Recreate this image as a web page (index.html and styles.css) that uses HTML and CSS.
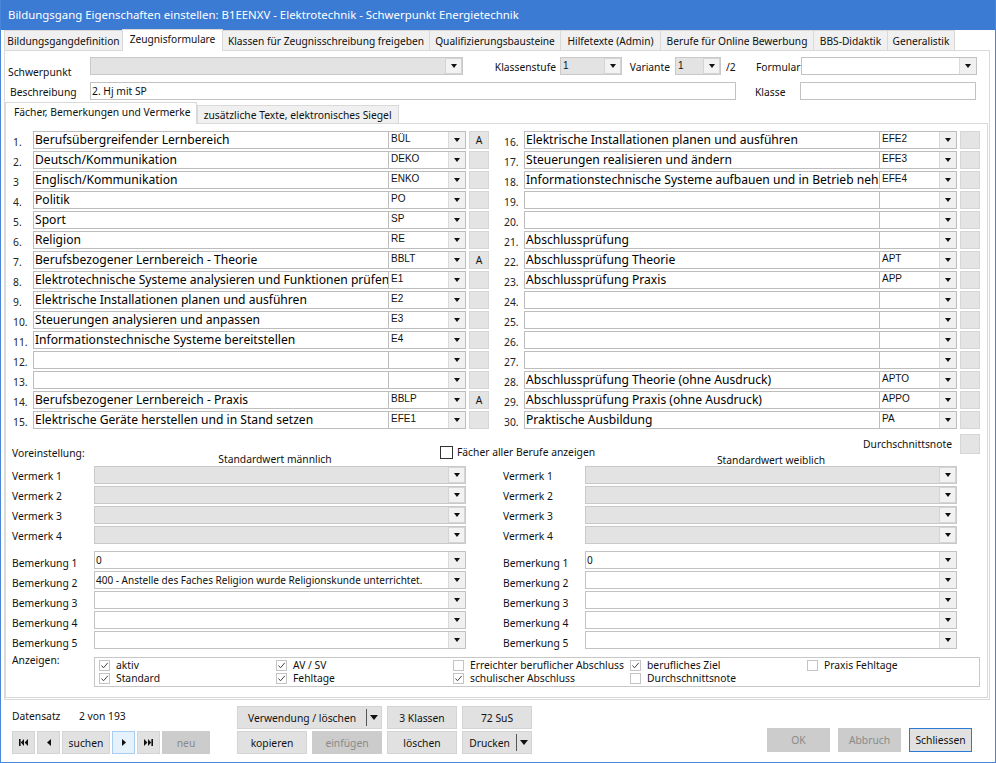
FILE: index.html
```html
<!DOCTYPE html>
<html lang="de">
<head>
<meta charset="utf-8">
<title>Bildungsgang Eigenschaften einstellen</title>
<link rel="stylesheet" href="styles.css">
</head>
<body>
<div class="window">
  <div class="titlebar">Bildungsgang Eigenschaften einstellen: B1EENXV - Elektrotechnik - Schwerpunkt Energietechnik</div>

  <div class="tabs">
    <div class="tab t1">Bildungsgangdefinition</div>
    <div class="tab t2 active">Zeugnisformulare</div>
    <div class="tab t3">Klassen für Zeugnisschreibung freigeben</div>
    <div class="tab t4">Qualifizierungsbausteine</div>
    <div class="tab t5">Hilfetexte (Admin)</div>
    <div class="tab t6">Berufe für Online Bewerbung</div>
    <div class="tab t7">BBS-Didaktik</div>
    <div class="tab t8">Generalistik</div>
  </div>

  <div class="tabpanel">
    <div class="frow">
      <span class="flbl l-schwer">Schwerpunkt</span>
      <div class="combo dis cb-schwer"><span class="val"></span><span class="dd"></span></div>
      <span class="flbl l-kst">Klassenstufe</span>
      <div class="combo dis cb-kst"><span class="val small">1</span><span class="dd"></span></div>
      <span class="flbl l-var">Variante</span>
      <div class="combo dis cb-var"><span class="val small">1</span><span class="dd"></span></div>
      <span class="flbl l-slash">/2</span>
      <span class="flbl l-form">Formular</span>
      <div class="combo cb-form"><span class="val"></span><span class="dd"></span></div>
    </div>
    <div class="frow r2">
      <span class="flbl l-besch">Beschreibung</span>
      <div class="input in-besch">2. Hj mit SP</div>
      <span class="flbl l-klasse">Klasse</span>
      <div class="input in-klasse"></div>
    </div>

    <div class="subtabs">
      <div class="stab active">Fächer, Bemerkungen und Vermerke</div>
      <div class="stab">zusätzliche Texte, elektronisches Siegel</div>
    </div>

    <div class="subpanel">
      <div class="subjects">
        <div class="col">
          <div class="srow"><span class="num">1.</span><div class="name">Berufsübergreifender Lernbereich</div><div class="code"><span class="cv">BÜL</span><span class="dd"></span></div><span class="abtn">A</span></div>
          <div class="srow"><span class="num">2.</span><div class="name">Deutsch/Kommunikation</div><div class="code"><span class="cv">DEKO</span><span class="dd"></span></div><span class="abtn"></span></div>
          <div class="srow"><span class="num">3</span><div class="name">Englisch/Kommunikation</div><div class="code"><span class="cv">ENKO</span><span class="dd"></span></div><span class="abtn"></span></div>
          <div class="srow"><span class="num">4.</span><div class="name">Politik</div><div class="code"><span class="cv">PO</span><span class="dd"></span></div><span class="abtn"></span></div>
          <div class="srow"><span class="num">5.</span><div class="name">Sport</div><div class="code"><span class="cv">SP</span><span class="dd"></span></div><span class="abtn"></span></div>
          <div class="srow"><span class="num">6.</span><div class="name">Religion</div><div class="code"><span class="cv">RE</span><span class="dd"></span></div><span class="abtn"></span></div>
          <div class="srow"><span class="num">7.</span><div class="name">Berufsbezogener Lernbereich - Theorie</div><div class="code"><span class="cv">BBLT</span><span class="dd"></span></div><span class="abtn">A</span></div>
          <div class="srow"><span class="num">8.</span><div class="name">Elektrotechnische Systeme analysieren und Funktionen prüfen</div><div class="code"><span class="cv">E1</span><span class="dd"></span></div><span class="abtn"></span></div>
          <div class="srow"><span class="num">9.</span><div class="name">Elektrische Installationen planen und ausführen</div><div class="code"><span class="cv">E2</span><span class="dd"></span></div><span class="abtn"></span></div>
          <div class="srow"><span class="num">10.</span><div class="name">Steuerungen analysieren und anpassen</div><div class="code"><span class="cv">E3</span><span class="dd"></span></div><span class="abtn"></span></div>
          <div class="srow"><span class="num">11.</span><div class="name">Informationstechnische Systeme bereitstellen</div><div class="code"><span class="cv">E4</span><span class="dd"></span></div><span class="abtn"></span></div>
          <div class="srow"><span class="num">12.</span><div class="name"></div><div class="code"><span class="cv"></span><span class="dd"></span></div><span class="abtn"></span></div>
          <div class="srow"><span class="num">13.</span><div class="name"></div><div class="code"><span class="cv"></span><span class="dd"></span></div><span class="abtn"></span></div>
          <div class="srow"><span class="num">14.</span><div class="name">Berufsbezogener Lernbereich - Praxis</div><div class="code"><span class="cv">BBLP</span><span class="dd"></span></div><span class="abtn">A</span></div>
          <div class="srow"><span class="num">15.</span><div class="name">Elektrische Geräte herstellen und in Stand setzen</div><div class="code"><span class="cv">EFE1</span><span class="dd"></span></div><span class="abtn"></span></div>
        </div>
        <div class="col">
          <div class="srow"><span class="num">16.</span><div class="name">Elektrische Installationen planen und ausführen</div><div class="code"><span class="cv">EFE2</span><span class="dd"></span></div><span class="abtn"></span></div>
          <div class="srow"><span class="num">17.</span><div class="name">Steuerungen realisieren und ändern</div><div class="code"><span class="cv">EFE3</span><span class="dd"></span></div><span class="abtn"></span></div>
          <div class="srow"><span class="num">18.</span><div class="name">Informationstechnische Systeme aufbauen und in Betrieb nehmen</div><div class="code"><span class="cv">EFE4</span><span class="dd"></span></div><span class="abtn"></span></div>
          <div class="srow"><span class="num">19.</span><div class="name"></div><div class="code"><span class="cv"></span><span class="dd"></span></div><span class="abtn"></span></div>
          <div class="srow"><span class="num">20.</span><div class="name"></div><div class="code"><span class="cv"></span><span class="dd"></span></div><span class="abtn"></span></div>
          <div class="srow"><span class="num">21.</span><div class="name">Abschlussprüfung</div><div class="code"><span class="cv"></span><span class="dd"></span></div><span class="abtn"></span></div>
          <div class="srow"><span class="num">22.</span><div class="name">Abschlussprüfung Theorie</div><div class="code"><span class="cv">APT</span><span class="dd"></span></div><span class="abtn"></span></div>
          <div class="srow"><span class="num">23.</span><div class="name">Abschlussprüfung Praxis</div><div class="code"><span class="cv">APP</span><span class="dd"></span></div><span class="abtn"></span></div>
          <div class="srow"><span class="num">24.</span><div class="name"></div><div class="code"><span class="cv"></span><span class="dd"></span></div><span class="abtn"></span></div>
          <div class="srow"><span class="num">25.</span><div class="name"></div><div class="code"><span class="cv"></span><span class="dd"></span></div><span class="abtn"></span></div>
          <div class="srow"><span class="num">26.</span><div class="name"></div><div class="code"><span class="cv"></span><span class="dd"></span></div><span class="abtn"></span></div>
          <div class="srow"><span class="num">27.</span><div class="name"></div><div class="code"><span class="cv"></span><span class="dd"></span></div><span class="abtn"></span></div>
          <div class="srow"><span class="num">28.</span><div class="name">Abschlussprüfung Theorie (ohne Ausdruck)</div><div class="code"><span class="cv">APTO</span><span class="dd"></span></div><span class="abtn"></span></div>
          <div class="srow"><span class="num">29.</span><div class="name">Abschlussprüfung Praxis (ohne Ausdruck)</div><div class="code"><span class="cv">APPO</span><span class="dd"></span></div><span class="abtn"></span></div>
          <div class="srow"><span class="num">30.</span><div class="name">Praktische Ausbildung</div><div class="code"><span class="cv">PA</span><span class="dd"></span></div><span class="abtn"></span></div>
        </div>
      </div>

      <div class="phead">
        <div class="p-vor">Voreinstellung:</div>
        <div class="p-male">Standardwert männlich</div>
        <div class="p-chk"><span class="cbx dark"></span><span>Fächer aller Berufe anzeigen</span></div>
        <div class="p-female">
          <div class="p-dnl">Durchschnittsnote</div>
          <div class="p-fem">Standardwert weiblich</div>
        </div>
        <div class="p-dn"><span class="dnbox"></span></div>
      </div>

      <div class="vgrid">
        <div class="vrow"><span class="vl">Vermerk 1</span><div class="combo dis wide"><span class="val"></span><span class="dd"></span></div></div>
        <div class="vrow"><span class="vl">Vermerk 1</span><div class="combo dis wide"><span class="val"></span><span class="dd"></span></div></div>
        <div class="vrow"><span class="vl">Vermerk 2</span><div class="combo dis wide"><span class="val"></span><span class="dd"></span></div></div>
        <div class="vrow"><span class="vl">Vermerk 2</span><div class="combo dis wide"><span class="val"></span><span class="dd"></span></div></div>
        <div class="vrow"><span class="vl">Vermerk 3</span><div class="combo dis wide"><span class="val"></span><span class="dd"></span></div></div>
        <div class="vrow"><span class="vl">Vermerk 3</span><div class="combo dis wide"><span class="val"></span><span class="dd"></span></div></div>
        <div class="vrow"><span class="vl">Vermerk 4</span><div class="combo dis wide"><span class="val"></span><span class="dd"></span></div></div>
        <div class="vrow"><span class="vl">Vermerk 4</span><div class="combo dis wide"><span class="val"></span><span class="dd"></span></div></div>
      </div>

      <div class="vgrid bgrid">
        <div class="vrow"><span class="vl bl">Bemerkung 1</span><div class="combo wide"><span class="val">0</span><span class="dd"></span></div></div>
        <div class="vrow"><span class="vl bl">Bemerkung 1</span><div class="combo wide"><span class="val">0</span><span class="dd"></span></div></div>
        <div class="vrow"><span class="vl bl">Bemerkung 2</span><div class="combo wide"><span class="val">400 - Anstelle des Faches Religion wurde Religionskunde unterrichtet.</span><span class="dd"></span></div></div>
        <div class="vrow"><span class="vl bl">Bemerkung 2</span><div class="combo wide"><span class="val"></span><span class="dd"></span></div></div>
        <div class="vrow"><span class="vl bl">Bemerkung 3</span><div class="combo wide"><span class="val"></span><span class="dd"></span></div></div>
        <div class="vrow"><span class="vl bl">Bemerkung 3</span><div class="combo wide"><span class="val"></span><span class="dd"></span></div></div>
        <div class="vrow"><span class="vl bl">Bemerkung 4</span><div class="combo wide"><span class="val"></span><span class="dd"></span></div></div>
        <div class="vrow"><span class="vl bl">Bemerkung 4</span><div class="combo wide"><span class="val"></span><span class="dd"></span></div></div>
        <div class="vrow"><span class="vl bl">Bemerkung 5</span><div class="combo wide"><span class="val"></span><span class="dd"></span></div></div>
        <div class="vrow"><span class="vl bl">Bemerkung 5</span><div class="combo wide"><span class="val"></span><span class="dd"></span></div></div>
      </div>

      <div class="anz">
        <span class="anz-l">Anzeigen:</span>
        <div class="anz-box">
          <label class="ck"><span class="cbx on"><svg viewBox="0 0 9 9"><polyline points="1.5,4.5 3.5,6.8 7.8,1.8"/></svg></span>aktiv</label>
          <label class="ck"><span class="cbx on"><svg viewBox="0 0 9 9"><polyline points="1.5,4.5 3.5,6.8 7.8,1.8"/></svg></span>Standard</label>
          <label class="ck"><span class="cbx on"><svg viewBox="0 0 9 9"><polyline points="1.5,4.5 3.5,6.8 7.8,1.8"/></svg></span>AV / SV</label>
          <label class="ck"><span class="cbx on"><svg viewBox="0 0 9 9"><polyline points="1.5,4.5 3.5,6.8 7.8,1.8"/></svg></span>Fehltage</label>
          <label class="ck"><span class="cbx"></span>Erreichter beruflicher Abschluss</label>
          <label class="ck"><span class="cbx on"><svg viewBox="0 0 9 9"><polyline points="1.5,4.5 3.5,6.8 7.8,1.8"/></svg></span>schulischer Abschluss</label>
          <label class="ck"><span class="cbx on"><svg viewBox="0 0 9 9"><polyline points="1.5,4.5 3.5,6.8 7.8,1.8"/></svg></span>berufliches Ziel</label>
          <label class="ck"><span class="cbx"></span>Durchschnittsnote</label>
          <label class="ck"><span class="cbx"></span>Praxis Fehltage</label>
        </div>
      </div>
    </div>
  </div>

  <div class="footer">
    <div class="f-left">
      <div class="f-info"><span class="f-ds">Datensatz</span><span>2 von 193</span></div>
      <div class="nav">
        <span class="btn nb"><svg width="9" height="7" viewBox="0 0 9 7"><rect x="0" y="0" width="1.6" height="7"/><polygon points="5,0 1.8,3.5 5,7"/><polygon points="9,0 5.6,3.5 9,7"/></svg></span>
        <span class="btn nb"><svg width="4" height="7" viewBox="0 0 4 7"><polygon points="4,0 0,3.5 4,7"/></svg></span>
        <span class="btn nw">suchen</span>
        <span class="btn nb cur"><svg width="4" height="7" viewBox="0 0 4 7"><polygon points="0,0 4,3.5 0,7"/></svg></span>
        <span class="btn nb"><svg width="9" height="7" viewBox="0 0 9 7"><polygon points="0,0 3.4,3.5 0,7"/><polygon points="4,0 7.2,3.5 4,7"/><rect x="7.4" y="0" width="1.6" height="7"/></svg></span>
        <span class="btn nw off">neu</span>
      </div>
    </div>
    <div class="f-mid">
      <span class="btn split span2"><span class="sl">Verwendung / löschen</span><span class="sd"></span></span>
      <span class="btn">3 Klassen</span>
      <span class="btn">72 SuS</span>
      <span class="btn">kopieren</span>
      <span class="btn off">einfügen</span>
      <span class="btn">löschen</span>
      <span class="btn split"><span class="sl">Drucken</span><span class="sd"></span></span>
    </div>
    <div class="f-right">
      <span class="btn dlg off">OK</span>
      <span class="btn dlg off">Abbruch</span>
      <span class="btn dlg def">Schliessen</span>
    </div>
  </div>
</div>
</body>
</html>
```

FILE: styles.css
```css
* { box-sizing: border-box; }
body {
  margin: 0;
  font-family: "Noto Sans", "DejaVu Sans", sans-serif;
  font-size: 10.3px;
  color: #111;
  background: #fff;
}
.window {
  width: 996px;
  height: 763px;
  border: 1px solid #4a86d9;
  border-top: 0;
  background: #fff;
  display: flex;
  flex-direction: column;
  overflow: hidden;
}
.titlebar {
  height: 30px;
  margin: 0 -1px;
  background: #3b7bd4;
  color: #fff;
  font-size: 11.4px;
  line-height: 30px;
  padding-left: 8px;
  white-space: nowrap;
}

/* main tabs */
.tabs {
  display: flex;
  align-items: flex-end;
  height: 20px;
  padding-left: 3px;
  position: relative;
  z-index: 1;
}
.tab {
  height: 20px;
  background: #f0f0f0;
  border: 1px solid #d9d9d9;
  border-bottom: 0;
  margin-right: -1px;
  line-height: 20px;
  font-size: 10.2px;
  text-align: center;
  white-space: nowrap;
  overflow: hidden;
}
.tab.active {
  height: 22px;
  margin-bottom: -1px;
  background: #fff;
  line-height: 18px;
}
.t1 { width: 119px; }
.t2 { width: 101px; }
.t3 { width: 208px; }
.t4 { width: 132px; }
.t5 { width: 101px; }
.t6 { width: 154px; }
.t7 { width: 75px; }
.t8 { width: 68px; }
.tabpanel {
  height: 650px;
  margin: 0 5px 0 3px;
  border: 1px solid #d9d9d9;
  padding-top: 6px;
}

/* top fields */
.frow {
  display: flex;
  align-items: flex-start;
  height: 18px;
  padding-left: 3px;
}
.frow.r2 { margin-top: 7px; }
.flbl { line-height: 14px; white-space: nowrap; }
.l-schwer { width: 82px; padding-top: 8px; }
.l-kst { width: 97px; text-align: right; padding-top: 3px; padding-right: 4px; }
.l-var { width: 53px; text-align: right; padding-top: 3px; padding-right: 5px; }
.l-slash { width: 35px; padding-left: 5px; padding-top: 3px; }
.l-form { width: 45px; padding-top: 3px; }
.l-besch { width: 82px; padding-left: 2px; padding-top: 3px; }
.l-klasse { width: 64px; padding-left: 19px; padding-top: 3px; }

.combo {
  display: flex;
  height: 18px;
  border: 1px solid #c2c2c2;
  background: #fff;
}
.combo.dis { background: #e3e3e3; border-color: #c9c9c9; }
.combo .val {
  flex: 1;
  min-width: 0;
  padding-left: 1px;
  line-height: 16px;
  font-size: 10px;
  white-space: nowrap;
  overflow: hidden;
}
.combo .val.small { font-family: "Liberation Sans", sans-serif; font-size: 10px; padding-left: 2px; }
.dd {
  width: 17px;
  flex: none;
  background: #f0f0f0;
  border-left: 1px solid #dadada;
  display: flex;
  align-items: center;
  justify-content: center;
}
.combo.dis .dd { background: #f2f2f2; border: 1px solid #d4d4d4; }
.dd::after {
  content: "";
  border-left: 3.5px solid transparent;
  border-right: 3.5px solid transparent;
  border-top: 4px solid #111;
}
.cb-schwer { width: 373px; }
.cb-kst { width: 62px; }
.cb-var { width: 46px; }
.cb-form { width: 176px; }
.input {
  height: 18px;
  border: 1px solid #c2c2c2;
  background: #fff;
  line-height: 16px;
  padding-left: 1px;
  font-size: 10.3px;
  white-space: nowrap;
  overflow: hidden;
}
.in-besch { width: 646px; }
.in-klasse { width: 176px; }

/* sub tabs */
.subtabs {
  display: flex;
  align-items: flex-end;
  height: 20px;
  margin-top: 3px;
  position: relative;
  z-index: 1;
}
.stab {
  height: 18px;
  padding: 0 6px 0 6px;
  background: #f0f0f0;
  border: 1px solid #d9d9d9;
  border-bottom: 0;
  line-height: 18px;
  white-space: nowrap;
}
.stab.active {
  height: 22px;
  margin-bottom: -1px;
  background: #fff;
  line-height: 18px;
  padding: 0 5px 0 8px;
}
.subpanel {
  height: 575px;
  width: 983px;
  border: 1px solid #d9d9d9;
  padding: 7px 0 0 6px;
}

/* subjects */
.subjects {
  display: grid;
  grid-template-columns: 477px 477px;
  column-gap: 14px;
}
.col { display: flex; flex-direction: column; gap: 2px; }
.srow { display: flex; height: 18px; }
.num { width: 21px; flex: none; padding: 4px 0 0 1px; line-height: 14px; font-size: 10.3px; color: #222; }
.name {
  width: 356px;
  flex: none;
  height: 18px;
  border: 1px solid #bdbdbd;
  background: #fff;
  font-size: 12.1px;
  line-height: 16px;
  padding-left: 1px;
  white-space: nowrap;
  overflow: hidden;
  color: #000;
}
.code {
  width: 77px;
  flex: none;
  height: 18px;
  display: flex;
  border: 1px solid #bdbdbd;
  border-left: 0;
  background: #fff;
}
.cv {
  flex: 1;
  font-family: "Liberation Sans", sans-serif;
  font-size: 10px;
  line-height: 14px;
  padding-left: 2px;
  white-space: nowrap;
}
.abtn {
  width: 20px;
  height: 18px;
  margin-left: 3px;
  flex: none;
  background: #e4e4e4;
  border: 1px solid #d6d6d6;
  text-align: center;
  line-height: 16px;
  font-size: 10.3px;
}

/* preset header */
.phead { display: flex; height: 37px; }
.p-vor { width: 82px; padding-top: 17px; line-height: 14px; }
.p-male { width: 346px; padding-top: 24px; padding-left: 16px; text-align: center; line-height: 13px; }
.p-chk { width: 144px; padding-top: 17px; display: flex; align-items: flex-start; gap: 4px; line-height: 13px; white-space: nowrap; }
.cbx {
  width: 11px;
  height: 11px;
  flex: none;
  border: 1px solid #c4c4c4;
  background: #fff;
  display: inline-flex;
  align-items: center;
  justify-content: center;
}
.cbx.dark { width: 13px; height: 13px; border-color: #333; }
.cbx svg { width: 9px; height: 9px; fill: none; stroke: #444; stroke-width: 1; }
.p-female { width: 372px; display: flex; flex-direction: column; }
.p-dnl { margin-top: 5px; height: 20px; line-height: 20px; text-align: right; padding-right: 4px; }
.p-fem { line-height: 13px; text-align: center; padding-left: 2px; }
.p-dn { width: 24px; padding: 5px 0 0 4px; }
.dnbox { display: block; width: 20px; height: 20px; background: #e4e4e4; border: 1px solid #d6d6d6; }

/* vermerk / bemerkung */
.vgrid {
  display: grid;
  grid-template-columns: 454px 454px;
  column-gap: 37px;
  row-gap: 2px;
}
.bgrid { margin-top: 7px; }
.vrow { display: flex; height: 18px; }
.vl { width: 82px; flex: none; line-height: 14px; padding-top: 3px; white-space: nowrap; }
.vl.bl { padding-top: 5px; }
.combo.wide { width: 372px; }

/* anzeigen */
.anz { display: flex; margin-top: 8px; }
.anz-l { width: 82px; margin-top: -4px; line-height: 14px; }
.anz-box {
  width: 886px;
  height: 30px;
  border: 1px solid #c8c8c8;
  padding: 1px 0 0 4px;
  display: grid;
  grid-template-columns: repeat(5, 177px);
  grid-template-rows: 13px 13px;
  grid-auto-flow: column;
}
.ck { display: flex; align-items: flex-start; gap: 6px; line-height: 13px; white-space: nowrap; }
.ck .cbx { margin-top: 1px; }

/* footer */
.footer { display: flex; height: 62px; padding-left: 11px; }
.f-left { width: 198px; padding-top: 9px; }
.f-info { display: flex; line-height: 14px; }
.f-ds { width: 67px; }
.nav { display: flex; gap: 2px; margin-top: 8px; }
.btn {
  height: 23px;
  background: #e1e1e1;
  border: 1px solid #d4d4d4;
  display: flex;
  align-items: center;
  justify-content: center;
  white-space: nowrap;
  color: #111;
}
.nb { width: 23px; }
.nw { width: 48px; }
.nb svg { fill: #111; }
.btn.cur { background: #e5f1fb; border-color: #a9cdf0; }
.btn.off { background: #cccccc; border-color: #cccccc; color: #8a8a8a; }
.f-mid {
  margin-left: 27px;
  padding-top: 6px;
  display: grid;
  grid-template-columns: repeat(4, 70px);
  grid-template-rows: 23px 23px;
  column-gap: 5px;
  row-gap: 2px;
}
.span2 { grid-column: span 2; }
.split { justify-content: stretch; }
.split .sl { flex: 1; text-align: center; }
.split .sd {
  width: 15px;
  height: 17px;
  border-left: 1px solid #555;
  display: flex;
  align-items: center;
  justify-content: center;
}
.split .sd::after {
  content: "";
  border-left: 4px solid transparent;
  border-right: 4px solid transparent;
  border-top: 5px solid #111;
}
.f-right {
  margin-left: auto;
  margin-right: 23px;
  padding-top: 28px;
  display: flex;
  gap: 8px;
}
.dlg { width: 63px; height: 24px; }
.btn.def { border-color: #2b7bd6; }
```
